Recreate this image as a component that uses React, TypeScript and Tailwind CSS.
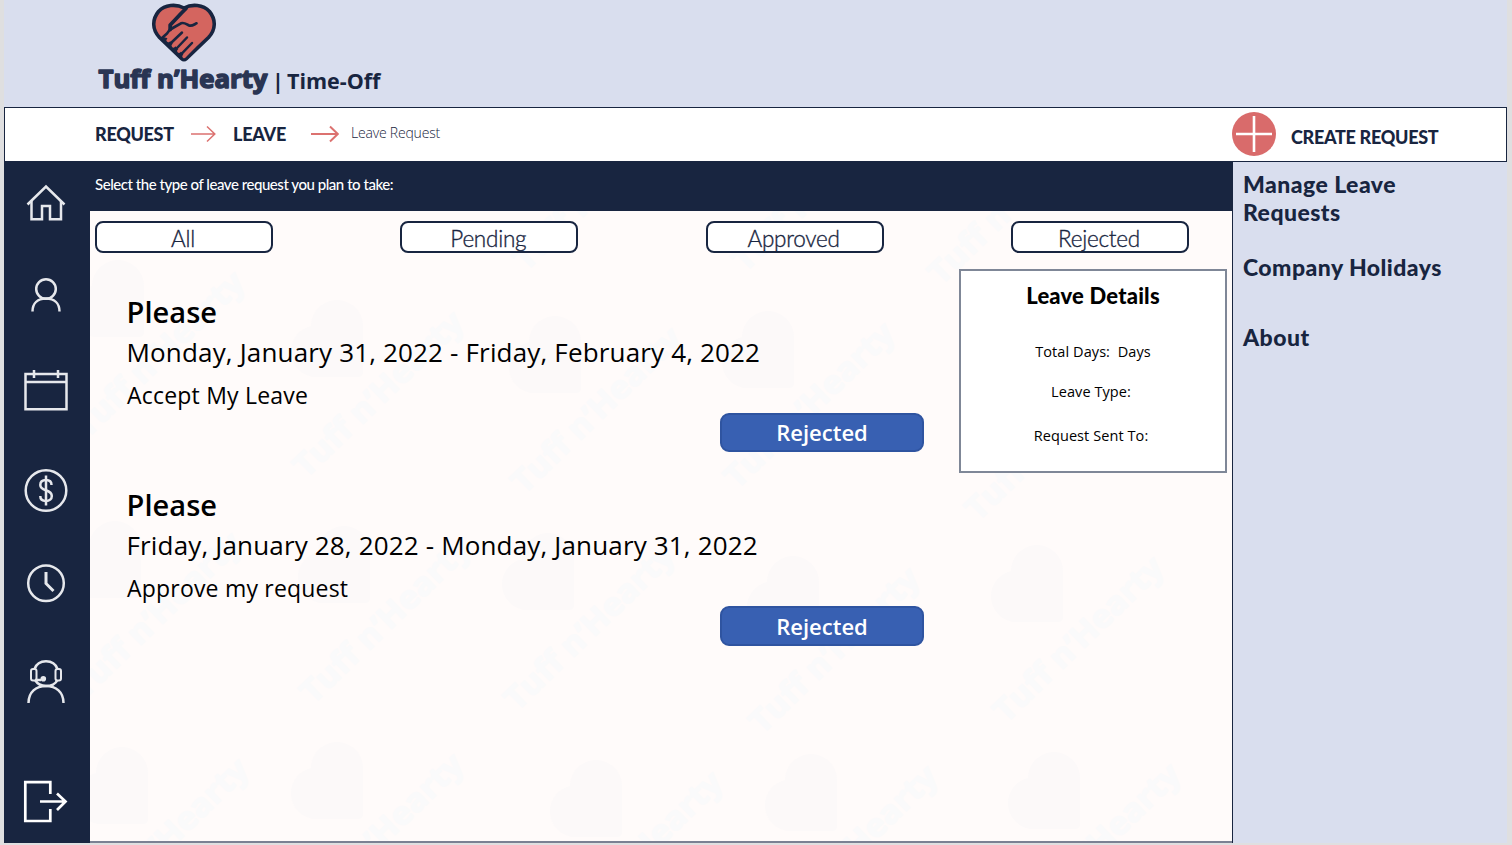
import React from "react";

const icon = "block shrink-0";

function HeartLogo() {
  return (
    <svg className="block" width="66" height="60" viewBox="151 3 66 60" fill="none" strokeLinecap="round" strokeLinejoin="round">
      <path
        d="M184 8C176 3.700 165 4.500 158.500 11.500C152 19.500 152 29.500 159.500 37.500L181.700 58.600Q184 60.800 186.300 58.600L208.500 37.500C216 29.500 216 19.500 209.500 11.500C203 4.500 192 3.700 184 8Z"
        fill="#d4655f"
        stroke="#182540"
        strokeWidth="3.600"
      />
      <path d="M170.200 29.500V25L181.500 13L186 8.500" stroke="#182540" strokeWidth="3.800" />
      <path d="M170.300 29L167 33.500L162 38" stroke="#182540" strokeWidth="2.600" />
      <path d="M172 28.500L174.500 27L181 23.300C184.500 22 186.500 24.500 189 25.500C192 26.500 194 24.500 196.500 23.300" stroke="#182540" strokeWidth="2.700" />
      <path d="M163 38.500L184 59L182 54.500L166 39Z" fill="#182540" stroke="#182540" strokeWidth="2.500" />
      <path d="M168.300 40.300L178 31M173.500 45.700L184 36M179 51L189 41M184.200 56.300L194 46" stroke="#d4655f" strokeWidth="3.800" />
      <path d="M171.500 42.500L182 32.500M177 48L187 37.500M182 53.300L192 43" stroke="#182540" strokeWidth="2.500" />
    </svg>
  );
}

function Brand() {
  return (
    <svg className="block" width="178" height="38" viewBox="96 62 178 38">
      <text
        x="98.500" y="88" textLength="169" lengthAdjust="spacingAndGlyphs"
        fill="#2a3553" stroke="#2a3553" strokeWidth="1.500" strokeLinejoin="round"
        className="font-['Open_Sans',sans-serif] text-[24.500px] font-bold"
      >
        Tuff n’Hearty
      </text>
    </svg>
  );
}

const line = { fill: "none", stroke: "#e6e8ec", strokeWidth: 2.5 };

function Sidebar() {
  return (
    <nav className="flex w-[86px] shrink-0 flex-col items-center bg-[#182540] pt-[16px] pr-[2px]">
      <svg className={icon} width="50" height="50" viewBox="21 178 50 50" {...line}>
        <path d="M27.500 204.500L46 186.500L64.500 204.500" />
        <path d="M31.500 201V219.300H42V206H50V219.300H61V201" />
      </svg>
      <svg className={icon + " mt-[42px]"} width="50" height="50" viewBox="21 270 50 50" {...line}>
        <circle cx="46" cy="289" r="9.800" />
        <path d="M32.500 311.500C32.500 303 38 298.500 46 298.500S59.500 303 59.500 311.500" />
      </svg>
      <svg className={icon + " mt-[45px]"} width="50" height="50" viewBox="21 365 50 50" {...line}>
        <path d="M25.500 374H66.500V409.200H25.500ZM25.500 382H66.500M34 370V378M58 370V378" />
      </svg>
      <svg className={icon + " mt-[50px]"} width="50" height="50" viewBox="21 465 50 50" {...line}>
        <circle cx="46" cy="490.500" r="20.300" />
        <path d="M46 475.500V505.500" />
        <path d="M51.500 485C51.500 481.500 49 480 46 480C42.500 480 40.300 482 40.300 485C40.300 492 51.800 488.500 51.800 496C51.800 499 49.500 501 46 501C42.500 501 40.300 499 40.300 496" />
      </svg>
      <svg className={icon + " mt-[43px]"} width="50" height="50" viewBox="21 558 50 50" {...line}>
        <circle cx="46" cy="583.300" r="17.800" />
        <path d="M46 572V583.500L53.500 591" strokeWidth="3" />
      </svg>
      <svg className={icon + " mt-[48px]"} width="50" height="50" viewBox="21 656 50 50" {...line}>
        <path d="M34.500 669C36.500 663.500 41 661.300 46 661.300S55.500 663.500 57.500 669M35 680C37.500 684 41.500 686 46 686S55.500 684 57.500 680" />
        <path d="M28.500 703C28.500 692 36 686 46 686S63.500 692 63.500 703" />
        <rect x="31" y="669" width="5.500" height="11.500" rx="2" strokeWidth="2" />
        <rect x="55.500" y="669" width="5.500" height="11.500" rx="2" strokeWidth="2" />
        <path d="M35 680H41" />
        <circle cx="43.300" cy="678.800" r="2.800" fill="#e6e8ec" stroke="none" />
      </svg>
      <svg className={icon + " mt-[69px]"} width="50" height="50" viewBox="21 775 50 50" fill="none" stroke="#ffffff" strokeWidth="2.700">
        <path d="M50.300 794V782.200H25.300V821H50.300V809M40 801.500H65.500M57 793.500L65.500 801.500L57 810" />
      </svg>
    </nav>
  );
}

function Arrow({ w, s }: { w: number; s: number }) {
  return (
    <svg className={icon} width={w} height="18" viewBox={`0 0 ${w} 18`} fill="none" stroke="#dc7270" strokeWidth={s}>
      <path d={`M0 9H${w - 1}M${w - 9} 1.500L${w - 1.200} 9L${w - 9} 16.500`} />
    </svg>
  );
}

/* bottom-right corner of each heart; the name runs diagonally underneath */
const marks = [
  [144, 337], [363, 377], [581, 393], [794, 388], [583, 170], [802, 171], [998, 184], [1035, 420],
  [141, 598], [370, 603], [574, 610], [819, 633], [1063, 622],
  [148, 824], [363, 819], [622, 837], [837, 831], [1080, 829],
];

function Watermark() {
  return (
    <svg className="absolute inset-0" width="1142" height="630" viewBox="90 211 1142 630">
      {marks.map(([x, y]) => (
        <g key={`${x}-${y}`} transform={`translate(${x} ${y})`}>
          <path d="M-5 0H-50A26 26 0 0 1 -52 -51A26 26 0 0 1 0 -51V-5Q0 0 -5 0Z" fill="#fcf9f9" />
          <text
            transform="translate(-57 102) rotate(-44)" textLength="222" lengthAdjust="spacingAndGlyphs"
            fill="#fafafb" stroke="#fafafb" strokeWidth="1.200" strokeLinejoin="round"
            className="font-['Open_Sans',sans-serif] text-[32px] font-bold"
          >
            Tuff n’Hearty
          </text>
        </g>
      ))}
    </svg>
  );
}

const filters = ["All", "Pending", "Approved", "Rejected"];

const requests = [
  { title: "Please", dates: "Monday, January 31, 2022 - Friday, February 4, 2022", note: "Accept My Leave", status: "Rejected" },
  { title: "Please", dates: "Friday, January 28, 2022 - Monday, January 31, 2022", note: "Approve my request", status: "Rejected" },
];

export default function App() {
  return (
    <div className="flex h-[845px] w-[1512px] flex-col overflow-hidden bg-[#dfdfe0] pr-[5px] pl-[4px] font-['Open_Sans',sans-serif] text-[#182540]">
      <header className="h-[107px] shrink-0 bg-[#d9deee] pt-[3px] pl-[92px]">
        <div className="pl-[55px]"><HeartLogo /></div>
        <div className="-mt-px flex items-start">
          <Brand />
          <div className="mt-[4px] -ml-[2px] flex gap-[7px] text-[21.500px] leading-[30px] font-bold">
            <span className="w-[8px] text-center">|</span>
            <span>Time-Off</span>
          </div>
        </div>
      </header>

      <div className="flex h-[55px] shrink-0 items-center border border-[#182540] bg-white pb-[2px] pl-[90px] font-['Lato',sans-serif]">
        <span className="w-[96px] text-[18px] leading-6 font-black tracking-[-0.300px]">REQUEST</span>
        <Arrow w={25} s={1.500} />
        <span className="ml-[17px] w-[78px] text-[18px] leading-6 font-black tracking-[-0.250px]">LEAVE</span>
        <Arrow w={28} s={2} />
        <span className="ml-[12px] -mt-[2px] w-[881px] font-['Open_Sans',sans-serif] text-[14px] leading-5 font-light tracking-[-0.200px]">Leave Request</span>
        <svg className={icon} width="44" height="44" viewBox="0 0 44 44">
          <circle cx="22" cy="22" r="22" fill="#d96b6b" />
          <path d="M4 22H40M22 4V40" stroke="#fff" strokeWidth="2.600" />
        </svg>
        <span className="ml-[15px] mt-[6px] text-[18px] leading-6 font-black tracking-[-0.300px]">CREATE REQUEST</span>
      </div>

      <div className="flex h-[681px] shrink-0">
        <Sidebar />
        <main className="flex w-[1143px] shrink-0 flex-col border-r border-[#182540]">
          <div className="h-[49px] shrink-0 bg-[#182540] pt-[12px] pl-[5px] font-['Lato',sans-serif] text-[15px] leading-5 font-medium tracking-[-0.460px] text-white">
            Select the type of leave request you plan to take:
          </div>
          <div className="relative h-[632px] border-b-2 border-[#7b8193] bg-[#fffbfa]">
            <Watermark />
            <div className="relative flex gap-[127.300px] pt-[10px] pl-[5px]">
              {filters.map((f) => (
                <button key={f} className="h-[32px] w-[178px] shrink-0 rounded-[8px] border-2 border-[#182540] bg-white pr-[2px] font-['Lato',sans-serif] text-[22.500px] leading-[31px] font-light tracking-[-0.250px] [-webkit-text-stroke:0.35px_#182540]">
                  {f}
                </button>
              ))}
            </div>
            <div className="relative flex pt-[16px]">
              <div className="w-[869px] shrink-0 pt-[23px] pl-[37px] text-black">
                {requests.map((r) => (
                  <article key={r.dates} className="h-[193.400px]">
                    <h2 className="-ml-[0.500px] text-[29px] leading-[40px] font-semibold tracking-[0.050px]">{r.title}</h2>
                    <p className="-ml-[0.500px] text-[26px] leading-[40px] tracking-[0.165px]">{r.dates}</p>
                    <p className="mt-[4px] text-[23px] leading-[38px] tracking-[0.200px]">{r.note}</p>
                    <div className="-mt-[1px] ml-[593px] flex h-[39.400px] w-[204px] items-center justify-center rounded-[9px] border-2 border-[#2f54a0] bg-[#3860b2] text-[22px] font-semibold text-white">
                      {r.status}
                    </div>
                  </article>
                ))}
              </div>
              <aside className="flex h-[204px] w-[268px] shrink-0 flex-col items-center border-2 border-[#7f8797] bg-white text-[14.500px] leading-5 tracking-[0.080px] text-black">
                <h3 className="mt-[10px] font-['Lato',sans-serif] text-[22px] leading-[30px] font-black tracking-[0.200px]">Leave Details</h3>
                <p className="mt-[31px] whitespace-pre">Total Days:  Days</p>
                <p className="mt-[20px] pr-[4px]">Leave Type:</p>
                <p className="mt-[24px] pr-[4px]">Request Sent To:</p>
              </aside>
            </div>
          </div>
        </main>
        <aside className="flex-1 bg-[#d9deee] pt-[8px] pl-[10px] font-['Lato',sans-serif] text-[23px] leading-[28px] font-black tracking-[0.450px]">
          <p className="w-[180px]">Manage Leave Requests</p>
          <p className="mt-[27px]">Company Holidays</p>
          <p className="mt-[42px]">About</p>
        </aside>
      </div>
    </div>
  );
}
